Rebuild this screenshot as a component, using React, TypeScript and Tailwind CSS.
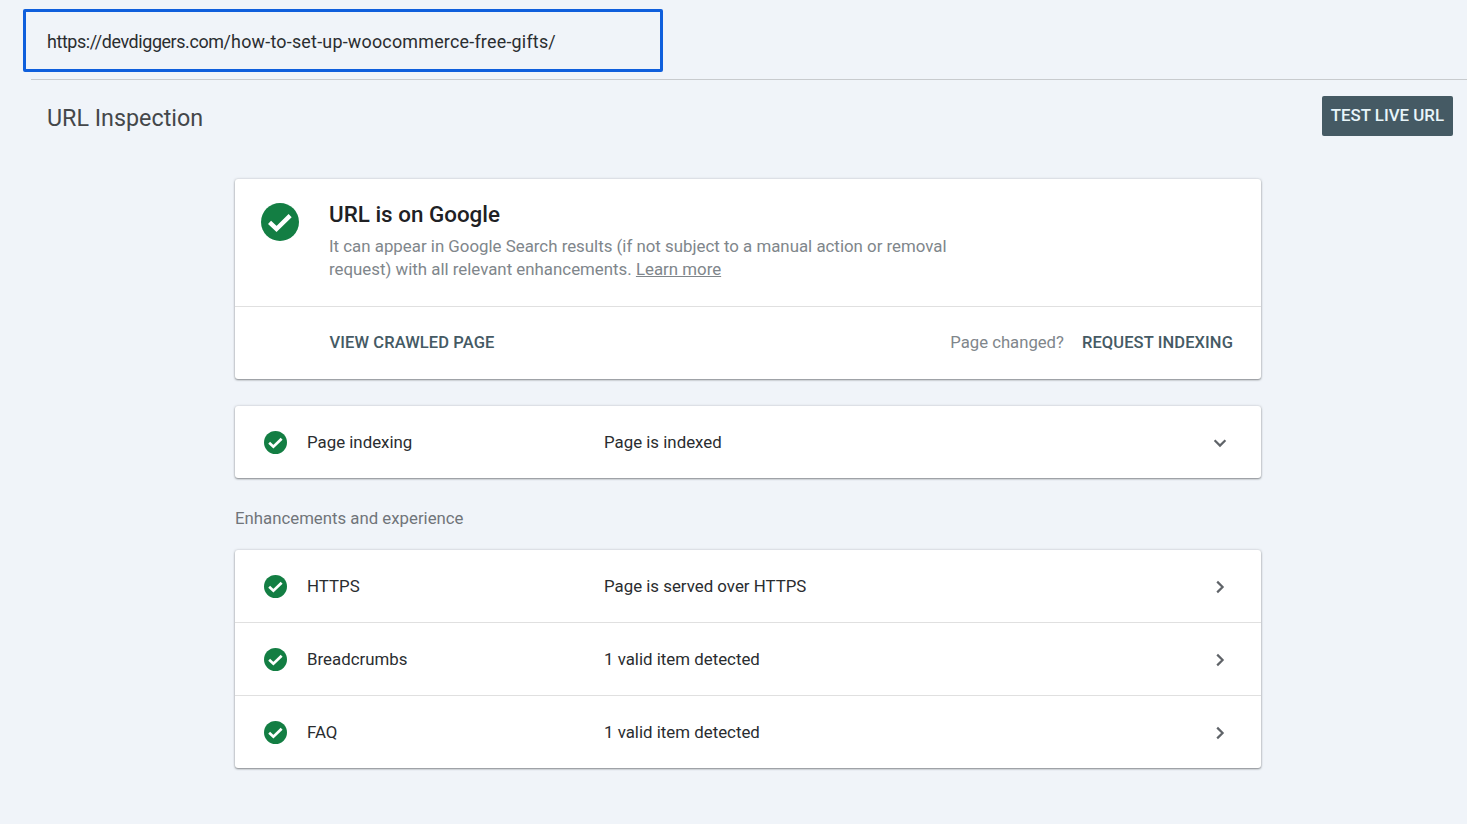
function CheckIcon({ size }: { size: number }) {
	return (
		<svg width={size} height={size} viewBox="0 0 24 24" className="shrink-0">
			<circle cx="12" cy="12" r="12" fill="#137e43" />
			<path d="M5.4 12.2l4.4 4.2 8.6-8.4" fill="none" stroke="#ffffff" strokeWidth="2.8" />
		</svg>
	);
}

function Chevron({ down }: { down?: boolean }) {
	return (
		<svg width="24" height="24" viewBox="0 0 24 24" className="shrink-0 mt-[2px]">
			<path
				d={down ? "M6.6 9.2l5.4 5.4 5.4-5.4" : "M9.2 6.6l5.4 5.4-5.4 5.4"}
				fill="none"
				stroke="#5f6368"
				strokeWidth="2.2"
			/>
		</svg>
	);
}

function StatusRow(props: { label: string; value: string; down?: boolean; divider?: boolean }) {
	return (
		<div className={`flex items-center pl-[29px] pr-[29px] ${props.divider ? "h-[73px] border-t border-[#e0e0e0]" : "h-[72px]"}`}>
			<CheckIcon size={23} />
			<div className="w-[317px] mt-[2px] pl-[20px] text-[16.85px] text-[#2a2d30]">{props.label}</div>
			<div className="flex-1 mt-[2px] text-[16.85px] text-[#2a2d30]">{props.value}</div>
			<Chevron down={props.down} />
		</div>
	);
}

const cardClass = "bg-white rounded-[3px] shadow-[0_1px_2px_rgba(60,64,67,0.55),0_0_3px_rgba(60,64,67,0.2)]";

export default function App() {
	return (
		<div className="h-[824px] bg-[#f0f4f9] font-['Roboto',sans-serif] overflow-hidden">
			<div className="h-[80px] ml-[31px] border-b border-[#c8cbce] pt-[9px]">
				<div className="-ml-[8px] w-[640px] h-[63px] flex items-center pl-[21px] pt-[3px] border-[3px] border-[#0f5fdc] rounded-[2px] text-[17.9px] text-[#2a2d30]">
					<span className="tracking-[-0.4px]">https://devdiggers.com</span>
					<span className="tracking-[0.22px]">/how-to-set-up-woocommerce-free-gifts/</span>
				</div>
			</div>
			<div className="flex justify-between pl-[47px] pr-[14px] pt-[16px]">
				<div className="text-[23.3px] leading-[45px] text-[#44474a]">URL Inspection</div>
				<div className="h-[40px] px-[9px] flex items-center bg-[#455a64] rounded-[2px] text-[16.85px] font-medium text-[#e8f5f9]">
					TEST LIVE URL
				</div>
			</div>
			<div className="w-[1026px] ml-[235px] mt-[38px]">
				<div className={cardClass}>
					<div className="flex h-[128px] pl-[26px] pt-[24px] border-b border-[#e0e0e0]">
						<CheckIcon size={38} />
						<div className="pl-[30px] -mt-[4px]">
							<div className="text-[22.4px] leading-[30px] font-medium text-[#202124]">URL is on Google</div>
							<div className="mt-[6px] text-[16.85px] leading-[23px] text-[#80868b] w-[640px]">
								It can appear in Google Search results (if not subject to a manual action or removal request) with all relevant enhancements. <span className="underline">Learn more</span>
							</div>
						</div>
					</div>
					<div className="flex items-center justify-between h-[72px] pl-[94.5px] pr-[28px] text-[16.5px]">
						<div className="font-medium tracking-[0.1px] text-[#455a64]">VIEW CRAWLED PAGE</div>
						<div className="flex items-center gap-[18px]">
							<span className="text-[16.7px] text-[#80868b]">Page changed?</span>
							<span className="font-medium tracking-[0.1px] text-[#455a64]">REQUEST INDEXING</span>
						</div>
					</div>
				</div>
				<div className={`${cardClass} mt-[27px]`}>
					<StatusRow label="Page indexing" value="Page is indexed" down />
				</div>
				<div className="h-[72px] pt-[29px] text-[16.8px] leading-[22px] text-[#70757a]">Enhancements and experience</div>
				<div className={cardClass}>
					<StatusRow label="HTTPS" value="Page is served over HTTPS" />
					<StatusRow label="Breadcrumbs" value="1 valid item detected" divider />
					<StatusRow label="FAQ" value="1 valid item detected" divider />
				</div>
			</div>
		</div>
	);
}
